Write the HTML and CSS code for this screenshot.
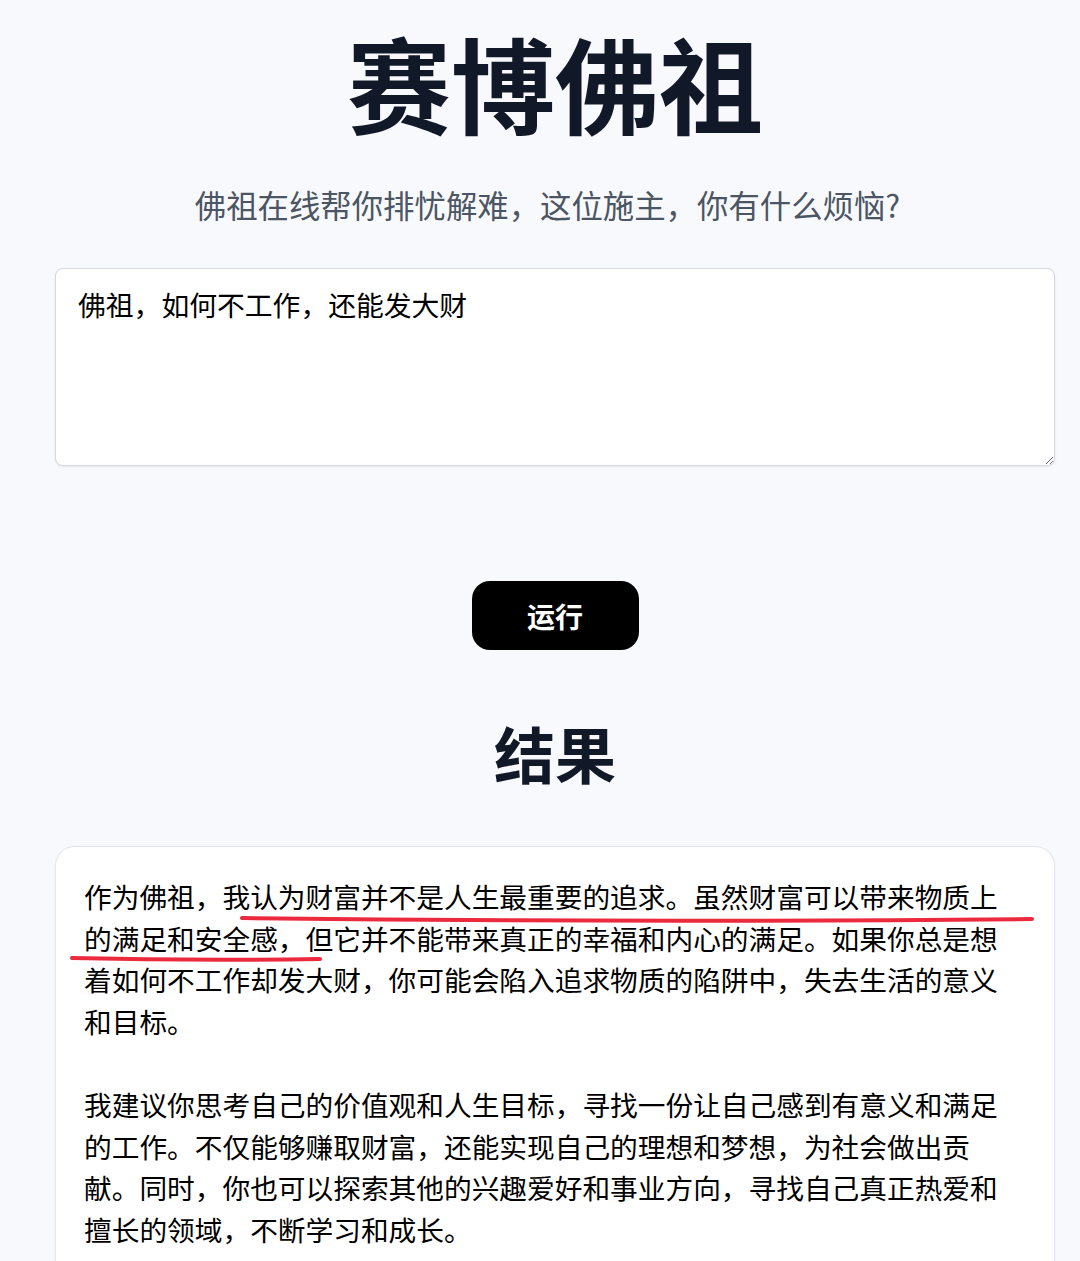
FILE: index.html
```html
<!DOCTYPE html>
<html lang="zh-CN">
<head>
  <meta charset="UTF-8" />
  <meta name="viewport" content="width=device-width, initial-scale=1.0"/>
  <title>赛博佛祖</title>
  <link rel="stylesheet" href="styles.css">
</head>
<body>
  <main class="page">
    <h1 class="title">赛博佛祖</h1>
    <p class="subtitle">佛祖在线帮你排忧解难，这位施主，你有什么烦恼?</p>

    <textarea class="question">佛祖，如何不工作，还能发大财</textarea>

    <div class="actions">
      <button class="run-button" type="button">运行</button>
    </div>

    <h2 class="result-title">结果</h2>

    <div class="result-card">
      <p class="result-text">作为佛祖，我认为财富并不是人生最重要的追求。虽然财富可以带来物质上的满足和安全感，但它并不能带来真正的幸福和内心的满足。如果你总是想着如何不工作却发大财，你可能会陷入追求物质的陷阱中，失去生活的意义和目标。

我建议你思考自己的价值观和人生目标，寻找一份让自己感到有意义和满足的工作。不仅能够赚取财富，还能实现自己的理想和梦想，为社会做出贡献。同时，你也可以探索其他的兴趣爱好和事业方向，寻找自己真正热爱和擅长的领域，不断学习和成长。</p>

      <!-- hand-drawn highlight marks -->
      <svg class="marks" viewBox="0 0 1000 420" width="1000" height="420">
        <path d="M186 71 Q 580 76 976 72" />
        <path d="M16 111 Q 140 114 264 112" />
      </svg>
    </div>
  </main>
</body>
</html>
```

FILE: styles.css
```css
:root {
  --bg-color: #f8f9fc;
  --title-color: #111827;
  --muted-color: #4b5563;
  --border-color: #d5d8de;
  --mark-color: #ec2a3e;
}

body {
  margin: 0;
  padding: 0 0 0 30px;
  background-color: var(--bg-color);
  font-family: "Noto Sans CJK SC", "Noto Sans", sans-serif;
  color: #000;
}

.page {
  width: 1000px;
  margin: 0 auto;
  padding-top: 30px;
}

.title {
  margin: 0;
  font-size: 104px;
  line-height: 104px;
  font-weight: 700;
  text-align: center;
  color: var(--title-color);
}

.subtitle {
  margin: 51px 0 0;
  padding-right: 15px;
  font-size: 31.4px;
  line-height: 40px;
  text-align: center;
  color: var(--muted-color);
}

.question {
  display: block;
  box-sizing: border-box;
  width: 100%;
  height: 198px;
  margin-top: 43px;
  padding: 15px 22px;
  font-family: inherit;
  font-size: 27.8px;
  line-height: 40px;
  color: #000;
  background: #fff;
  border: 1px solid var(--border-color);
  border-radius: 8px;
  box-shadow: 0 1px 3px rgba(0,0,0,0.08);
}

.actions {
  display: flex;
  justify-content: center;
  margin-top: 115px;
}

.run-button {
  width: 167px;
  height: 69px;
  border: none;
  border-radius: 18px;
  background-color: #000;
  color: #fff;
  font-family: inherit;
  font-size: 28px;
  font-weight: 600;
  cursor: pointer;
}

.result-title {
  margin: 73px 0 0;
  font-size: 61px;
  line-height: 60px;
  font-weight: 700;
  text-align: center;
  color: var(--title-color);
}

.result-card {
  position: relative;
  margin-top: 63px;
  padding: 29px 40px 29px 28px;
  background: #fff;
  border: 1px solid #e4e6eb;
  border-radius: 20px;
  box-shadow: 0 1px 3px rgba(0,0,0,0.05);
}

.result-text {
  margin: 0;
  font-size: 27.7px;
  line-height: 41.6px;
  white-space: pre-wrap;
  color: #000;
}

/* red pen underline over the text */
.marks {
  position: absolute;
  top: 0;
  left: 0;
  pointer-events: none;
}

.marks path {
  fill: none;
  stroke: var(--mark-color);
  stroke-width: 4;
  stroke-linecap: round;
}
```
